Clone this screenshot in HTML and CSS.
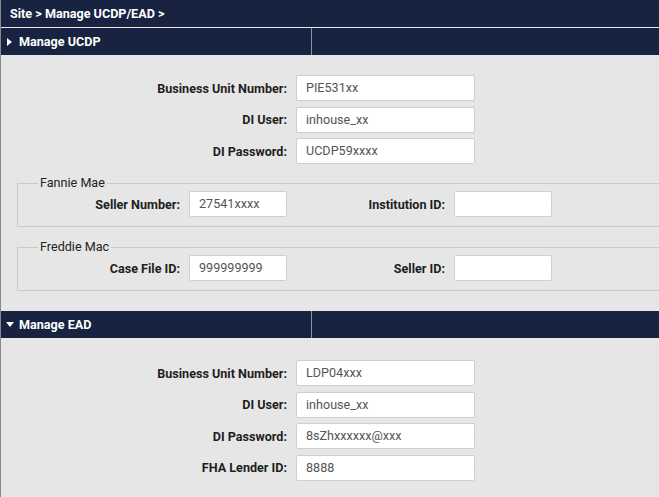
FILE: index.html
```html
<!DOCTYPE html>
<html>
<head>
<meta charset="utf-8">
<link rel="stylesheet" href="styles.css">
</head>
<body>
<div class="page">
  <div class="crumb">Site &gt; Manage UCDP/EAD &gt;</div>
  <div class="sec-head">
    <div class="sec-title"><span class="tri tri-right"></span>Manage UCDP</div>
    <div class="sec-rest"></div>
  </div>
  <div class="sec-body">
    <div class="form">
      <label class="lbl">Business Unit Number:</label><div class="inp">PIE531xx</div>
      <label class="lbl">DI User:</label><div class="inp">inhouse_xx</div>
      <label class="lbl">DI Password:</label><div class="inp">UCDP59xxxx</div>
    </div>
    <fieldset class="group first">
      <legend>Fannie Mae</legend>
      <div class="pair-grid">
        <label class="lbl">Seller Number:</label><div class="inp">27541xxxx</div>
        <label class="lbl">Institution ID:</label><div class="inp"></div>
      </div>
    </fieldset>
    <fieldset class="group">
      <legend>Freddie Mac</legend>
      <div class="pair-grid">
        <label class="lbl">Case File ID:</label><div class="inp">999999999</div>
        <label class="lbl">Seller ID:</label><div class="inp"></div>
      </div>
    </fieldset>
  </div>
  <div class="sec-head">
    <div class="sec-title"><span class="tri tri-down"></span>Manage EAD</div>
    <div class="sec-rest"></div>
  </div>
  <div class="sec-body ead">
    <div class="form">
      <label class="lbl">Business Unit Number:</label><div class="inp">LDP04xxx</div>
      <label class="lbl">DI User:</label><div class="inp">inhouse_xx</div>
      <label class="lbl">DI Password:</label><div class="inp">8sZhxxxxxx@xxx</div>
      <label class="lbl">FHA Lender ID:</label><div class="inp">8888</div>
    </div>
  </div>
</div>
</body>
</html>
```

FILE: styles.css
```css
html, body {
  margin: 0;
  padding: 0;
  background: #e6e6e6;
  font-family: Roboto, "Liberation Sans", Arial, sans-serif;
  overflow: hidden;
}
.page {
  border-left: 1px solid #8a8a8a;
  min-height: 497px;
  box-sizing: border-box;
}
.crumb {
  height: 27px;
  line-height: 27px;
  background: #172340;
  color: #fff;
  font-weight: bold;
  font-size: 12.6px;
  padding-left: 9px;
  border-bottom: 1px solid #e8e8e8;
}
.sec-head {
  display: flex;
  height: 27px;
  background: #172340;
}
.sec-title {
  width: 310px;
  border-right: 1px solid #8d93a0;
  color: #fff;
  font-weight: bold;
  font-size: 12.6px;
  line-height: 27px;
  display: flex;
  align-items: center;
}
.sec-rest {
  flex: 1;
}
.tri {
  display: inline-block;
  width: 0;
  height: 0;
}
.tri-right {
  margin-left: 6px;
  margin-right: 7px;
  border-top: 4px solid transparent;
  border-bottom: 4px solid transparent;
  border-left: 5px solid #fff;
}
.tri-down {
  margin-left: 5px;
  margin-right: 5px;
  border-left: 4px solid transparent;
  border-right: 4px solid transparent;
  border-top: 5px solid #fff;
}
.sec-body {
  padding: 20px 0 20px 0;
}
.sec-body.ead {
  padding-top: 22px;
}
.form {
  display: grid;
  grid-template-columns: 286px 179px;
  column-gap: 9px;
  row-gap: 5.6px;
  align-items: center;
}
.lbl {
  text-align: right;
  font-weight: bold;
  font-size: 12.6px;
  color: #1e1e1e;
}
.inp {
  height: 26px;
  box-sizing: border-box;
  background: #fff;
  border: 1px solid #cfcfcf;
  border-radius: 2px;
  padding: 0 9px;
  font-size: 12.6px;
  line-height: 24px;
  color: #555;
}
.group {
  margin: 11px 0 0 16px;
  padding: 0 0 9px 0;
  border: 1px solid #c9c9c9;
  border-right: none;
}
.group + .group {
  margin-top: 12px;
}
.group legend {
  margin-left: 20px;
  padding: 0 2px;
  font-size: 12.6px;
  line-height: 16px;
  color: #222;
}
.pair-grid {
  display: grid;
  grid-template-columns: 162px 98px 149px 98px;
  column-gap: 9px;
  align-items: center;
}
```
